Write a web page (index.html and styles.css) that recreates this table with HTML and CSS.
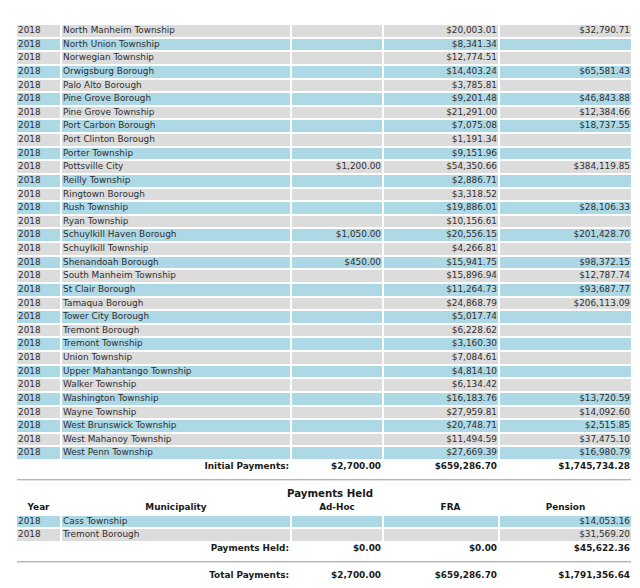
FILE: index.html
```html
<!DOCTYPE html>
<html>
<head>
<meta charset="utf-8">
<link rel="stylesheet" href="styles.css">
</head>
<body>
<div class="page">
<table class="grid">
<colgroup><col class="c-year"><col class="c-muni"><col class="c-adhoc"><col class="c-fra"><col class="c-pen"></colgroup>
<tbody>
<tr class="g"><td>2018</td><td>North Manheim Township</td><td class="n"></td><td class="n">$20,003.01</td><td class="n">$32,790.71</td></tr>
<tr class="b"><td>2018</td><td>North Union Township</td><td class="n"></td><td class="n">$8,341.34</td><td class="n"></td></tr>
<tr class="g"><td>2018</td><td>Norwegian Township</td><td class="n"></td><td class="n">$12,774.51</td><td class="n"></td></tr>
<tr class="b"><td>2018</td><td>Orwigsburg Borough</td><td class="n"></td><td class="n">$14,403.24</td><td class="n">$65,581.43</td></tr>
<tr class="g"><td>2018</td><td>Palo Alto Borough</td><td class="n"></td><td class="n">$3,785.81</td><td class="n"></td></tr>
<tr class="b"><td>2018</td><td>Pine Grove Borough</td><td class="n"></td><td class="n">$9,201.48</td><td class="n">$46,843.88</td></tr>
<tr class="g"><td>2018</td><td>Pine Grove Township</td><td class="n"></td><td class="n">$21,291.00</td><td class="n">$12,384.66</td></tr>
<tr class="b"><td>2018</td><td>Port Carbon Borough</td><td class="n"></td><td class="n">$7,075.08</td><td class="n">$18,737.55</td></tr>
<tr class="g"><td>2018</td><td>Port Clinton Borough</td><td class="n"></td><td class="n">$1,191.34</td><td class="n"></td></tr>
<tr class="b"><td>2018</td><td>Porter Township</td><td class="n"></td><td class="n">$9,151.96</td><td class="n"></td></tr>
<tr class="g"><td>2018</td><td>Pottsville City</td><td class="n">$1,200.00</td><td class="n">$54,350.66</td><td class="n">$384,119.85</td></tr>
<tr class="b"><td>2018</td><td>Reilly Township</td><td class="n"></td><td class="n">$2,886.71</td><td class="n"></td></tr>
<tr class="g"><td>2018</td><td>Ringtown Borough</td><td class="n"></td><td class="n">$3,318.52</td><td class="n"></td></tr>
<tr class="b"><td>2018</td><td>Rush Township</td><td class="n"></td><td class="n">$19,886.01</td><td class="n">$28,106.33</td></tr>
<tr class="g"><td>2018</td><td>Ryan Township</td><td class="n"></td><td class="n">$10,156.61</td><td class="n"></td></tr>
<tr class="b"><td>2018</td><td>Schuylkill Haven Borough</td><td class="n">$1,050.00</td><td class="n">$20,556.15</td><td class="n">$201,428.70</td></tr>
<tr class="g"><td>2018</td><td>Schuylkill Township</td><td class="n"></td><td class="n">$4,266.81</td><td class="n"></td></tr>
<tr class="b"><td>2018</td><td>Shenandoah Borough</td><td class="n">$450.00</td><td class="n">$15,941.75</td><td class="n">$98,372.15</td></tr>
<tr class="g"><td>2018</td><td>South Manheim Township</td><td class="n"></td><td class="n">$15,896.94</td><td class="n">$12,787.74</td></tr>
<tr class="b"><td>2018</td><td>St Clair Borough</td><td class="n"></td><td class="n">$11,264.73</td><td class="n">$93,687.77</td></tr>
<tr class="g"><td>2018</td><td>Tamaqua Borough</td><td class="n"></td><td class="n">$24,868.79</td><td class="n">$206,113.09</td></tr>
<tr class="b"><td>2018</td><td>Tower City Borough</td><td class="n"></td><td class="n">$5,017.74</td><td class="n"></td></tr>
<tr class="g"><td>2018</td><td>Tremont Borough</td><td class="n"></td><td class="n">$6,228.62</td><td class="n"></td></tr>
<tr class="b"><td>2018</td><td>Tremont Township</td><td class="n"></td><td class="n">$3,160.30</td><td class="n"></td></tr>
<tr class="g"><td>2018</td><td>Union Township</td><td class="n"></td><td class="n">$7,084.61</td><td class="n"></td></tr>
<tr class="b"><td>2018</td><td>Upper Mahantango Township</td><td class="n"></td><td class="n">$4,814.10</td><td class="n"></td></tr>
<tr class="g"><td>2018</td><td>Walker Township</td><td class="n"></td><td class="n">$6,134.42</td><td class="n"></td></tr>
<tr class="b"><td>2018</td><td>Washington Township</td><td class="n"></td><td class="n">$16,183.76</td><td class="n">$13,720.59</td></tr>
<tr class="g"><td>2018</td><td>Wayne Township</td><td class="n"></td><td class="n">$27,959.81</td><td class="n">$14,092.60</td></tr>
<tr class="b"><td>2018</td><td>West Brunswick Township</td><td class="n"></td><td class="n">$20,748.71</td><td class="n">$2,515.85</td></tr>
<tr class="g"><td>2018</td><td>West Mahanoy Township</td><td class="n"></td><td class="n">$11,494.59</td><td class="n">$37,475.10</td></tr>
<tr class="b"><td>2018</td><td>West Penn Township</td><td class="n"></td><td class="n">$27,669.39</td><td class="n">$16,980.79</td></tr>
<tr class="tot"><td colspan="2" class="n">Initial Payments:</td><td class="n">$2,700.00</td><td class="n">$659,286.70</td><td class="n">$1,745,734.28</td></tr>
</tbody>
</table>
<div class="rule rule-a"></div>
<table class="grid">
<caption>Payments Held</caption>
<colgroup><col class="c-year"><col class="c-muni"><col class="c-adhoc"><col class="c-fra"><col class="c-pen"></colgroup>
<thead>
<tr class="head"><th>Year</th><th>Municipality</th><th>Ad-Hoc</th><th class="h-fra">FRA</th><th>Pension</th></tr>
</thead>
<tbody>
<tr class="b"><td>2018</td><td>Cass Township</td><td class="n"></td><td class="n"></td><td class="n">$14,053.16</td></tr>
<tr class="g"><td>2018</td><td>Tremont Borough</td><td class="n"></td><td class="n"></td><td class="n">$31,569.20</td></tr>
<tr class="tot"><td colspan="2" class="n">Payments Held:</td><td class="n">$0.00</td><td class="n">$0.00</td><td class="n">$45,622.36</td></tr>
</tbody>
</table>
<div class="rule rule-b"></div>
<table class="grid">
<colgroup><col class="c-year"><col class="c-muni"><col class="c-adhoc"><col class="c-fra"><col class="c-pen"></colgroup>
<tbody>
<tr class="tot"><td colspan="2" class="n">Total Payments:</td><td class="n">$2,700.00</td><td class="n">$659,286.70</td><td class="n">$1,791,356.64</td></tr>
</tbody>
</table>
</div>
</body>
</html>
```

FILE: styles.css
```css
html, body {
  margin: 0;
  padding: 0;
  background: #ffffff;
}

.page {
  padding: 23px 0 0 15px;
  font-family: "DejaVu Sans", Verdana, sans-serif;
  font-size: 8.9px;
  color: #2e2e2e;
}

.grid {
  width: 618px;
  table-layout: fixed;
  border-collapse: separate;
  border-spacing: 2px;
}

.c-year { width: 43px; }
.c-muni { width: 228px; }
.c-adhoc { width: 90px; }
.c-fra { width: 114px; }
.c-pen { width: 131px; }

.grid td,
.grid th {
  height: 11.62px;
  line-height: 11.62px;
  padding: 0 1px;
  white-space: nowrap;
  overflow: hidden;
  text-align: left;
  font-weight: normal;
}

.grid td.n { text-align: right; }

.g td { background: #dcdcdc; }
.b td { background: #add8e6; }

.tot td {
  font-weight: bold;
  color: #1a1a1a;
}

.head th {
  font-weight: bold;
  text-align: center;
  color: #1a1a1a;
}

.head th.h-fra { padding-left: 20px; }

.grid caption {
  font-weight: bold;
  font-size: 10.2px;
  line-height: 12px;
  height: 12px;
  color: #1a1a1a;
  text-align: center;
  padding-left: 12px;
}

.rule {
  width: 614px;
  margin-left: 2px;
  height: 0;
  border-top: 1px solid #b4b4b4;
  border-bottom: 1px solid #e2e2e2;
}

.rule-a { margin-top: 4.5px; margin-bottom: 7px; }
.rule-b { margin-top: 4.2px; margin-bottom: 5.5px; }
```
